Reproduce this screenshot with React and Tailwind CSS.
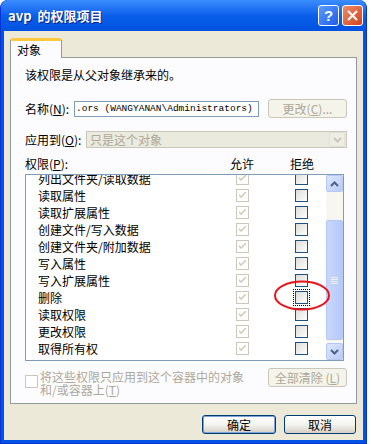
import React from "react";

const rows = [
  "列出文件夹/读取数据",
  "读取属性",
  "读取扩展属性",
  "创建文件/写入数据",
  "创建文件夹/附加数据",
  "写入属性",
  "写入扩展属性",
  "删除",
  "读取权限",
  "更改权限",
  "取得所有权",
];

const Tick = ({ color }) => (
  <svg width="7" height="7" viewBox="0 0 7 7" className="block">
    <path d="M0 2 L0 4 L2 6 L7 1 L7 -1 L2 4 Z" fill={color} />
  </svg>
);

const CheckBox = ({ disabled, checked, focus }) => (
  <div
    className={
      "w-[13px] h-[13px] shrink-0 border flex items-center justify-center " +
      (disabled
        ? "border-[#cac8bb] bg-white"
        : "border-[#1c5180] bg-linear-to-br from-[#dcdcd7] to-white") +
      (focus ? " outline-1 outline-dotted outline-black outline-offset-[1px]" : "")
    }
  >
    {checked && <Tick color="#cac8bb" />}
  </div>
);

const Chevron = ({ up, color }) => (
  <svg width="9" height="6" viewBox="0 0 9 6">
    <path
      d={up ? "M1 5 L4.5 1.5 L8 5" : "M1 1 L4.5 4.5 L8 1"}
      stroke={color}
      strokeWidth="2"
      fill="none"
    />
  </svg>
);

const ScrollBtn = ({ up }) => (
  <div className="h-[17px] rounded-[2px] border border-[#b4c8f6] bg-linear-to-br from-[#dde6fd] to-[#b9cbf5] flex items-center justify-center">
    <Chevron up={up} color="#4d6185" />
  </div>
);

const Button = ({ children, disabled, className }) => (
  <div
    className={
      "flex items-center justify-center rounded-[3px] border text-[12px] leading-[12px] " +
      (disabled
        ? "border-[#c9c7ba] text-[#aca899] bg-[#f5f4ea] "
        : "border-[#003c74] text-black bg-linear-to-b from-white via-[#f4f4f0] to-[#d6d0c5] ") +
      className
    }
  >
    {children}
  </div>
);

const Key = ({ k }) => (
  <>
    (<span className="underline">{k}</span>)
  </>
);

export default function App() {
  return (
    <div className="w-[371px] h-[444px] bg-white overflow-hidden [font-family:'Noto_Sans_CJK_SC',sans-serif]">
      <div className="w-[367px] h-[444px] flex flex-col rounded-t-[8px] bg-[#0054e3] border-x border-b border-[#0831d9]">
        {/* title bar */}
        <div className="h-[31px] shrink-0 flex items-center pl-[7px] pr-[3px] rounded-t-[7px] bg-linear-to-b from-[#3b8cfd] via-[#0a5fea] to-[#0052e0]">
          <div className="flex-1 text-white font-bold text-[13px] leading-[13px] [text-shadow:1px_1px_#0a1e8c]">
            avp&nbsp; 的权限项目
          </div>
          <div className="flex gap-[3px]">
            <div className="w-[21px] h-[21px] rounded-[3px] border border-white bg-linear-to-br from-[#5c9cff] to-[#1d5ae8] flex items-center justify-center text-white font-bold text-[15px] leading-[15px] [font-family:'Liberation_Sans',sans-serif]">
              ?
            </div>
            <div className="w-[21px] h-[21px] rounded-[3px] border border-white bg-linear-to-br from-[#f08a66] to-[#d2401a] flex items-center justify-center">
              <svg width="11" height="11" viewBox="0 0 11 11">
                <path d="M1 1 L10 10 M10 1 L1 10" stroke="white" strokeWidth="2" />
              </svg>
            </div>
          </div>
        </div>

        {/* body */}
        <div className="flex-1 mx-[3px] mb-[3px] bg-[#ece9d8] flex flex-col px-[6px] pt-[7px] text-[12px] leading-[12px] text-black">
          {/* tab */}
          <div className="flex">
            <div className="relative z-10 w-[52px] h-[20px] -mb-px bg-[#fcfcfe] border-x border-[#919b9c] rounded-t-[3px] border-t-[3px] border-t-[#ffc83c] pl-[6px] pt-[3px]">
              对象
            </div>
          </div>
          {/* panel */}
          <div className="relative h-[347px] border border-[#919b9c] bg-[#fcfcfe] pl-[14px] pr-[9px] pt-[11px]">
            <div className="h-[12px]">该权限是从父对象继承来的。</div>

            <div className="mt-[18px] h-[19px] flex items-center">
              <div className="w-[49px]">
                名称<Key k="N" />:
              </div>
              <div className="w-[185px] h-[16px] border border-[#7f9db9] bg-white flex items-center pl-[1px] text-[9.5px] [font-family:'Liberation_Mono',monospace] whitespace-nowrap overflow-hidden">
                .ors (WANGYANAN\Administrators)
              </div>
              <Button disabled className="ml-auto w-[79px] h-[19px]">
                更改<Key k="C" />...
              </Button>
            </div>

            <div className="mt-[13px] h-[17px] flex items-center">
              <div className="w-[61px]">
                应用到<Key k="O" />:
              </div>
              <div className="flex-1 h-[17px] border border-[#c9c7ba] bg-[#ebeade] flex items-center">
                <div className="flex-1 pl-[3px] text-[#aca899]">只是这个对象</div>
                <div className="w-[16px] h-[15px] mr-px bg-[#eeede5] border border-[#e2e0d3] rounded-[2px] flex items-center justify-center">
                  <Chevron color="#c9c7ba" />
                </div>
              </div>
            </div>

            <div className="mt-[10px] h-[12px] flex">
              <div className="w-[205px]">
                权限<Key k="P" />:
              </div>
              <div className="w-[60px]">允许</div>
              <div>拒绝</div>
            </div>

            {/* list */}
            <div className="relative mt-[4px] h-[187px] w-[319px] border border-[#7f9db9] bg-white flex">
              <div className="flex-1 overflow-hidden">
                <div className="-mt-[5px]">
                  {rows.map((r) => (
                    <div key={r} className="h-[17px] flex items-center">
                      <div className="w-[210px] shrink-0 pl-[12px] whitespace-nowrap">{r}</div>
                      <CheckBox disabled checked />
                      <div className="w-[46px] shrink-0" />
                      <CheckBox focus={r === "删除"} />
                    </div>
                  ))}
                </div>
              </div>
              <div className="w-[17px] bg-[#f7f6f1] flex flex-col">
                <ScrollBtn up />
                <div className="h-[28px]" />
                <div className="h-[120px] rounded-[2px] border border-[#b4c8f6] bg-linear-to-r from-[#c9d7fc] to-[#b5c9f7] flex flex-col items-center justify-center gap-[1px]">
                  <div className="w-[7px] h-px bg-[#eef3fe]" />
                  <div className="w-[7px] h-px bg-[#eef3fe]" />
                  <div className="w-[7px] h-px bg-[#eef3fe]" />
                  <div className="w-[7px] h-px bg-[#eef3fe]" />
                </div>
                <div className="flex-1" />
                <ScrollBtn />
              </div>
              <svg
                className="absolute left-[247px] top-[105px] pointer-events-none"
                width="58"
                height="31"
                viewBox="0 0 58 31"
              >
                <ellipse cx="29" cy="15.5" rx="27" ry="14" stroke="#e8141c" strokeWidth="2" fill="none" />
              </svg>
            </div>

            {/* bottom */}
            <div className="mt-[7px] flex items-start">
              <div className="mt-[7px] mr-[2px]">
                <CheckBox disabled />
              </div>
              <div className="text-[#aca899] leading-[13px] mt-[2px]">
                <div>将这些权限只应用到这个容器中的对象</div>
                <div>
                  和/或容器上<Key k="T" />
                </div>
              </div>
              <Button disabled className="ml-auto w-[79px] h-[19px]">
                全部清除 <Key k="L" />
              </Button>
            </div>
          </div>

          {/* footer buttons */}
          <div className="mt-[11px] flex justify-end gap-[8px] pr-px">
            <Button className="w-[74px] h-[19px] border-[#003c74] shadow-[inset_0_0_0_1px_#7ea2d8]">确定</Button>
            <Button className="w-[72px] h-[19px]">取消</Button>
          </div>
        </div>
      </div>
    </div>
  );
}
